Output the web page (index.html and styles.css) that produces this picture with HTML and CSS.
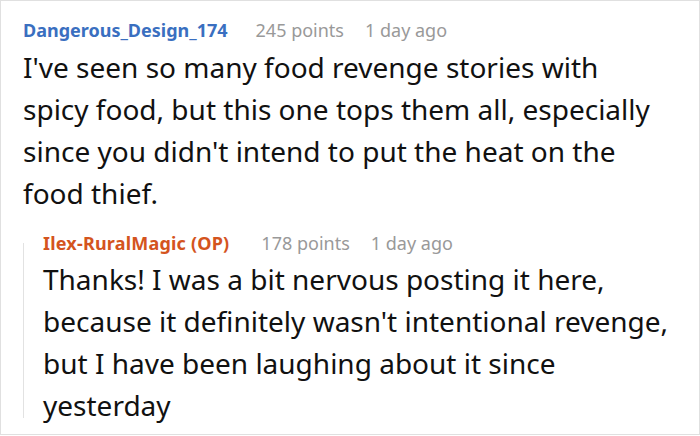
FILE: index.html
```html
<!DOCTYPE html>
<html>
<head>
<meta charset="utf-8">
<link rel="stylesheet" href="styles.css">
</head>
<body>
<div class="thread">
  <div class="comment">
    <div class="meta">
      <span class="user user-blue">Dangerous_Design_174</span>
      <span class="points">245 points</span>
      <span class="time">1 day ago</span>
    </div>
    <p class="body">I've seen so many food revenge stories with spicy food, but this one tops them all, especially since you didn't intend to put the heat on the food thief.</p>
  </div>
  <div class="reply">
    <div class="meta">
      <span class="user user-orange">Ilex-RuralMagic (OP)</span>
      <span class="points points-reply">178 points</span>
      <span class="time">1 day ago</span>
    </div>
    <p class="body body-reply">Thanks! I was a bit nervous posting it here, because it definitely wasn't intentional revenge, but I have been laughing about it since yesterday</p>
  </div>
</div>
</body>
</html>
```
FILE: styles.css
```css
html, body {
  margin: 0;
  padding: 0;
  background: #ffffff;
}
.thread {
  box-sizing: border-box;
  width: 700px;
  height: 435px;
  border: 1px solid #e0e0e0;
  padding: 17px 0 0 22px;
  font-family: "Noto Sans", "Open Sans", sans-serif;
  color: #111111;
  overflow: hidden;
}
.meta {
  display: flex;
  align-items: baseline;
  font-size: 18px;
  line-height: 24px;
  height: 24px;
  white-space: nowrap;
}
.user {
  font-weight: 700;
}
.user-blue { color: #3a6fc0; }
.user-orange {
  color: #d4541e;
  letter-spacing: 0.2px;
}
.points {
  color: #999999;
  margin-left: 28px;
}
.points-reply {
  margin-left: 32px;
}
.time {
  color: #999999;
  margin-left: 21px;
}
.body {
  margin: 4px 0 0 0;
  font-size: 28px;
  line-height: 42px;
  width: 640px;
}
.reply {
  position: relative;
  margin-top: 17px;
  padding-left: 20px;
}
.reply::before {
  content: "";
  position: absolute;
  left: 0;
  top: 12px;
  height: 175px;
  width: 1px;
  background: #e2e2e2;
}
.body-reply {
  margin-top: 3px;
  width: 640px;
}
```
